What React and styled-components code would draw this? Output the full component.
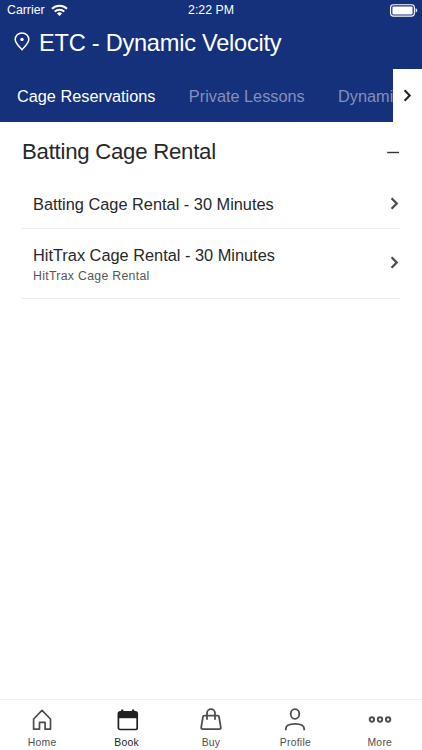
import React from 'react';
import styled, { createGlobalStyle } from 'styled-components';

const GlobalStyle = createGlobalStyle`
    *{
        box-sizing: border-box;
    }
    body{
        margin: 0;
        background: #fff;
        font-family: "Liberation Sans", Arial, sans-serif;
        color: #27282a;
    }
    svg{
        display: block;
        flex-shrink: 0;
    }
`;

const Screen = styled.div`
    display: flex;
    flex-direction: column;
    width: 100%;
    height: 100vh;
    overflow: hidden;
`;

const Header = styled.header`
    height: 122px;
    background: #16317b;
    color: #fff;
`;

const StatusBar = styled.div`
    display: grid;
    grid-template-columns: 1fr auto 1fr;
    align-items: center;
    height: 20px;
    padding: 0 4px 0 7px;
    font-size: 12.3px;
    line-height: 20px;
    .carrier{
        display: flex;
        align-items: center;
        gap: 6px;
    }
    .time{
        margin-right: 3px;
        line-height: 18px;
        padding-bottom: 1px;
    }
    .battery{
        justify-self: end;
    }
`;

const Location = styled.div`
    display: flex;
    align-items: center;
    height: 49px;
    padding: 0 0 3px 14px;
    gap: 9px;
    h1{
        margin: 0;
        font-size: 23.6px;
        font-weight: 400;
        line-height: 28px;
        letter-spacing: -0.25px;
    }
    svg{
        margin-bottom: 3px;
    }
`;

const Tabs = styled.nav`
    display: flex;
    height: 53px;
    .scroller{
        display: flex;
        flex: 1;
        min-width: 0;
        overflow: hidden;
        align-items: center;
        gap: 33.4px;
        padding-left: 17px;
    }
    .next{
        display: flex;
        align-items: center;
        width: 29px;
        padding-left: 10px;
        background: #fff;
    }
`;

const Tab = styled.span`
    flex-shrink: 0;
    font-size: 16.3px;
    line-height: 20px;
    white-space: nowrap;
    color: ${({ $active }) => ($active ? '#fff' : '#8390ba')};
`;

const Content = styled.main`
    flex: 1;
    padding: 0 22px;
`;

const SectionTitle = styled.div`
    display: flex;
    align-items: center;
    justify-content: space-between;
    height: 58px;
    padding-top: 1px;
    h2{
        margin: 0;
        font-size: 22.2px;
        font-weight: 400;
        line-height: 28px;
        letter-spacing: -0.25px;
    }
`;

const Service = styled.div`
    display: flex;
    align-items: center;
    justify-content: space-between;
    height: ${({ $tall }) => ($tall ? '70px' : '49px')};
    padding: 0 1px 0 11px;
    border-bottom: 1px solid #ededee;
    .info{
        padding-top: ${({ $tall }) => ($tall ? '2px' : '0')};
    }
    .name{
        font-size: 16.35px;
        line-height: 20px;
    }
    .detail{
        padding-top: 2px;
        font-size: 12.3px;
        line-height: 18px;
        letter-spacing: 0.3px;
        color: #55565b;
    }
    svg{
        margin-bottom: 2px;
    }
`;

const BottomBar = styled.nav`
    display: grid;
    grid-template-columns: repeat(5, 1fr);
    height: 51px;
    border-top: 1px solid #f0f0f0;
`;

const BarItem = styled.div`
    display: flex;
    flex-direction: column;
    align-items: center;
    padding-top: 8px;
    font-size: 10.4px;
    line-height: 14px;
    letter-spacing: 0.25px;
    color: ${({ $active }) => ($active ? '#202124' : '#4c4d52')};
    svg{
        margin-bottom: 4px;
    }
`;

const WifiIcon = () => (
    <svg width="17" height="13" viewBox="0 0 17 13" fill="none" stroke="#fff" strokeWidth="1.9">
        <path d="M1 4.8a10.8 10.8 0 0 1 15 0" />
        <path d="M3.7 7.6a7 7 0 0 1 9.6 0" />
        <path d="M8.5 12.1 5.9 9.5a3.8 3.8 0 0 1 5.2 0z" fill="#fff" stroke="none" />
    </svg>
);

const BatteryIcon = () => (
    <svg className="battery" width="28" height="13" viewBox="0 0 28 13">
        <rect x=".6" y=".7" width="23.8" height="11.4" rx="2.8" fill="none" stroke="#fff" strokeWidth="1.1" />
        <rect x="2.4" y="2.4" width="20.2" height="8" rx="1" fill="#fff" />
        <path d="M25.6 4.2q1.7.6 1.7 2.2t-1.7 2.2z" fill="#fff" />
    </svg>
);

const PinIcon = () => (
    <svg width="16" height="19" viewBox="0 0 16 19">
        <path d="M8 17.7C5.3 14.6 1.2 11.2 1.2 7.5a6.8 6.6 0 0 1 13.6 0c0 3.7-4.1 7.1-6.8 10.2z" fill="none" stroke="#fff" strokeWidth="1.5" />
        <circle cx="8" cy="7.4" r="1.7" fill="#fff" />
    </svg>
);

const Chevron = ({ color = '#4b4c4f', weight = 2.3 }) => (
    <svg width="9" height="13" viewBox="0 0 9 13" fill="none" stroke={color} strokeWidth={weight}>
        <path d="m1.6 1.3 5.1 5.2-5.1 5.2" />
    </svg>
);

const MinusIcon = () => (
    <svg width="14" height="4" viewBox="0 0 14 4">
        <path d="M1.2 2.5H13" stroke="#333437" strokeWidth="1.4" />
    </svg>
);

const HomeIcon = () => (
    <svg width="24" height="24" viewBox="0 0 24 24" fill="none" stroke="#4c4d52" strokeWidth="1.7">
        <path d="M3.6 11 12 2.4l8.5 8.6v10.2h-5.4v-6.8H9.5v6.8H3.6z" strokeLinejoin="round" />
    </svg>
);

const BookIcon = () => (
    <svg width="24" height="24" viewBox="0 0 24 24">
        <rect x="3.4" y="3.9" width="18.8" height="17.6" rx="1.8" fill="none" stroke="#202124" strokeWidth="1.7" />
        <path d="M3.4 4h18.8v6.2H3.4z" fill="#202124" />
        <path d="M7.2 1.5v4M18.2 1.5v4" stroke="#202124" strokeWidth="2.2" />
    </svg>
);

const BuyIcon = () => (
    <svg width="24" height="24" viewBox="0 0 24 24" fill="none" stroke="#4c4d52" strokeWidth="1.8">
        <path d="M5.3 7.6h13.4q1 0 1.3 1l1.8 10.7q.2 1.8-1.5 1.8H3.7q-1.7 0-1.5-1.8L4 8.6q.3-1 1.3-1z" />
        <path d="M8 11.8V5.2a4 4 0 0 1 8 0v6.6" />
    </svg>
);

const ProfileIcon = () => (
    <svg width="24" height="24" viewBox="0 0 24 24" fill="none" stroke="#4c4d52" strokeWidth="1.8">
        <ellipse cx="12" cy="6" rx="4.3" ry="4.8" />
        <path d="M2.8 22.2V21c0-3.2 3.6-5.1 9.2-5.1s9.2 1.9 9.2 5.1v1.2" />
    </svg>
);

const MoreIcon = () => (
    <svg width="24" height="24" viewBox="0 0 24 24" fill="none" stroke="#4c4d52" strokeWidth="1.9">
        <circle cx="3.9" cy="11.5" r="2.2" />
        <circle cx="12" cy="11.5" r="2.2" />
        <circle cx="20.1" cy="11.5" r="2.2" />
    </svg>
);

const tabs = ['Cage Reservations', 'Private Lessons', 'Dynami'];

const services = [
    { name: 'Batting Cage Rental - 30 Minutes' },
    { name: 'HitTrax Cage Rental - 30 Minutes', detail: 'HitTrax Cage Rental' },
];

const menu = [
    { text: 'Home', Icon: HomeIcon },
    { text: 'Book', Icon: BookIcon },
    { text: 'Buy', Icon: BuyIcon },
    { text: 'Profile', Icon: ProfileIcon },
    { text: 'More', Icon: MoreIcon },
];

function App() {
    return (
        <Screen>
            <GlobalStyle />
            <Header>
                <StatusBar>
                    <div className="carrier">Carrier <WifiIcon /></div>
                    <span className="time">2:22 PM</span>
                    <BatteryIcon />
                </StatusBar>
                <Location>
                    <PinIcon />
                    <h1>ETC - Dynamic Velocity</h1>
                </Location>
                <Tabs>
                    <div className="scroller">
                        {tabs.map((text, i) => (
                            <Tab key={text} $active={i === 0}>{text}</Tab>
                        ))}
                    </div>
                    <div className="next"><Chevron color="#202124" weight={2} /></div>
                </Tabs>
            </Header>
            <Content>
                <SectionTitle>
                    <h2>Batting Cage Rental</h2>
                    <MinusIcon />
                </SectionTitle>
                {services.map(item => (
                    <Service key={item.name} $tall={!!item.detail}>
                        <div className="info">
                            <div className="name">{item.name}</div>
                            {item.detail && <div className="detail">{item.detail}</div>}
                        </div>
                        <Chevron />
                    </Service>
                ))}
            </Content>
            <BottomBar>
                {menu.map(({ text, Icon }) => (
                    <BarItem key={text} $active={text === 'Book'}>
                        <Icon />
                        {text}
                    </BarItem>
                ))}
            </BottomBar>
        </Screen>
    );
}

export default App;
